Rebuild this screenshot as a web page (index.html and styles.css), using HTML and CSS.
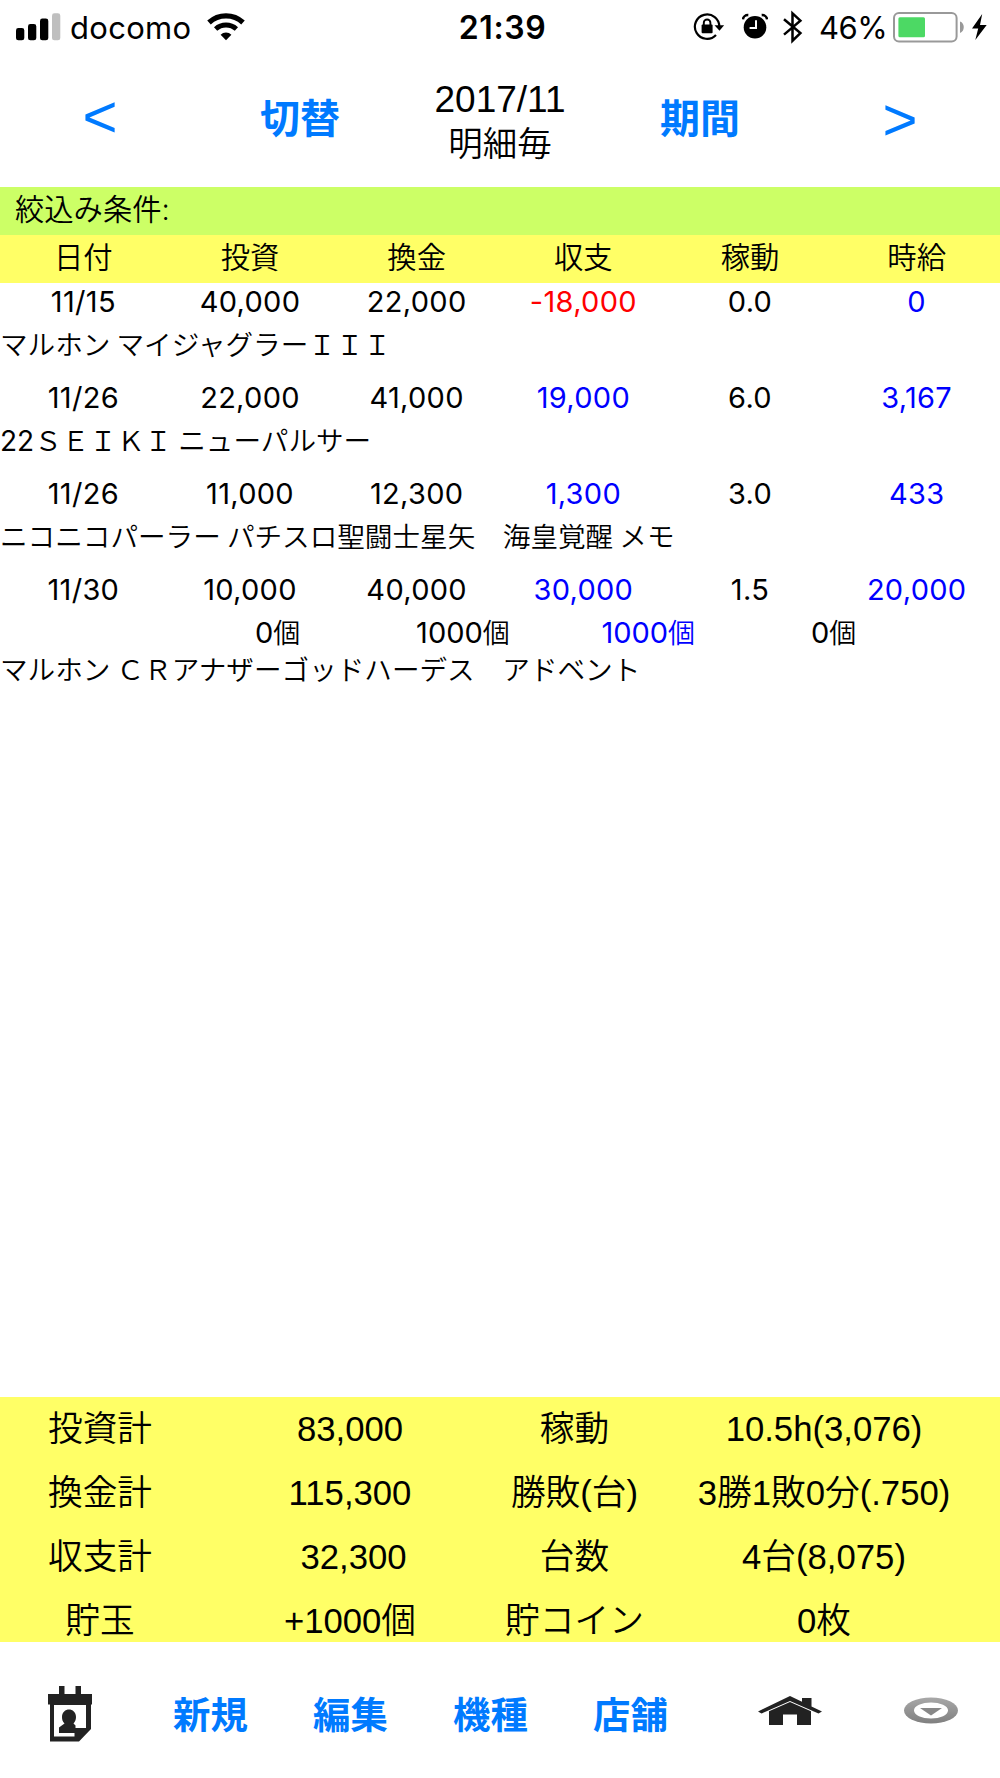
FILE: index.html
```html
<!DOCTYPE html>
<html lang="ja">
<head>
  <meta charset="UTF-8" />
  <meta name="viewport" content="width=device-width, initial-scale=1.0"/>
  <title>明細毎 2017/11</title>
  <link rel="stylesheet" href="styles.css">
</head>
<body>

  <!-- Status bar -->
  <div class="status">
    <div class="status-left">
      <svg width="45" height="56" viewBox="0 0 45 56">
        <rect x="0" y="28" width="8.3" height="12.3" rx="2.4"/>
        <rect x="12" y="24" width="8.3" height="16.3" rx="2.4"/>
        <rect x="24" y="18.6" width="8.3" height="21.7" rx="2.4"/>
        <rect x="36" y="13.3" width="8.3" height="27" rx="2.4" fill="#bfbfbf"/>
      </svg>
      <span class="carrier">docomo</span>
      <svg class="wifi" width="38" height="56" viewBox="0 0 38 56">
        <path d="M2 22.500a25 25 0 0 1 34 0" fill="none" stroke="#000" stroke-width="5.2"/>
        <path d="M8.600 29a15.500 15.500 0 0 1 20.800 0" fill="none" stroke="#000" stroke-width="4.8"/>
        <path d="M19 40.300l-5.400-5.600a7.800 7.800 0 0 1 10.800 0z"/>
      </svg>
    </div>
    <span class="time">21:39</span>
    <div class="status-right">
      <svg width="32" height="56" viewBox="0 0 32 56">
        <path d="M26.3 27A12.2 12.2 0 1 0 23 35" fill="none" stroke="#000" stroke-width="2.2"/>
        <path d="M21.5 25.3h9.6l-4.6 5.500z"/>
        <rect x="8.6" y="24.5" width="11" height="8.8" rx="1"/>
        <path d="M10.8 25v-2.2a3.3 3.3 0 0 1 6.6 0V25" fill="none" stroke="#000" stroke-width="1.9"/>
      </svg>
      <svg class="alarm" width="26" height="56" viewBox="0 0 26 56">
        <circle cx="13" cy="27.3" r="11.3"/>
        <path d="M.9 19.4a5 5 0 0 1 5.4-4.3M25.1 19.4a5 5 0 0 0-5.4-4.3" fill="none" stroke="#000" stroke-width="2.6"/>
        <path d="M14 20.3v7.6H7.6" fill="none" stroke="#fff" stroke-width="2"/>
      </svg>
      <svg class="bluetooth" width="20" height="56" viewBox="0 0 20 56">
        <path d="M1 19.3l16.4 13.8-7.9 7.600V13.3l7.9 7.400L1 34.6" fill="none" stroke="#000" stroke-width="2.5"/>
      </svg>
      <span class="percent">46%</span>
      <svg class="battery" width="72" height="56" viewBox="0 0 72 56">
        <rect x="1" y="13" width="62.6" height="28.6" rx="5" fill="#fff" stroke="#999" stroke-width="2"/>
        <rect x="5.4" y="17.3" width="26.6" height="20" rx="1.5" fill="#4cd964"/>
        <path d="M67 21.6c5 1.4 5 10 0 11.4z" fill="#999"/>
      </svg>
      <svg class="bolt" width="15" height="56" viewBox="0 0 15 56">
        <path d="M10.2 14L0 28.6h6.2L3.3 40 14.7 25H8z"/>
      </svg>
    </div>
  </div>

  <!-- Month navigation -->
  <div class="nav">
    <a class="arrow prev">&lt;</a>
    <a>切替</a>
    <div class="title">
      <div class="month">2017/11</div>
      <div class="mode">明細毎</div>
    </div>
    <a>期間</a>
    <a class="arrow next">&gt;</a>
  </div>

  <div class="filter">絞込み条件:</div>

  <div class="cols head">
    <span>日付</span><span>投資</span><span>換金</span><span>収支</span><span>稼動</span><span>時給</span>
  </div>

  <!-- Records -->
  <div class="list">
    <div class="record">
      <div class="cols">
        <span>11/15</span><span>40,000</span><span>22,000</span><span class="minus">-18,000</span><span>0.0</span><span class="plus">0</span>
      </div>
      <div class="name">マルホン マイジャグラーＩＩＩ</div>
    </div>
    <div class="record">
      <div class="cols">
        <span>11/26</span><span>22,000</span><span>41,000</span><span class="plus">19,000</span><span>6.0</span><span class="plus">3,167</span>
      </div>
      <div class="name"><span class="num">22</span>ＳＥＩＫＩ ニューパルサー</div>
    </div>
    <div class="record">
      <div class="cols">
        <span>11/26</span><span>11,000</span><span>12,300</span><span class="plus">1,300</span><span>3.0</span><span class="plus">433</span>
      </div>
      <div class="name">ニコニコパーラー パチスロ聖闘士星矢　海皇覚醒 メモ</div>
    </div>
    <div class="record">
      <div class="cols">
        <span>11/30</span><span>10,000</span><span>40,000</span><span class="plus">30,000</span><span>1.5</span><span class="plus">20,000</span>
      </div>
      <div class="balls">
        <span>0<small>個</small></span><span>1000<small>個</small></span><span class="plus">1000<small>個</small></span><span>0<small>個</small></span>
      </div>
      <div class="name tight">マルホン ＣＲアナザーゴッドハーデス　アドベント</div>
    </div>
  </div>

  <!-- Totals -->
  <div class="total">
    <span>投資計</span><span>83,000</span><span>稼動</span><span>10.5h(3,076)</span>
    <span>換金計</span><span>115,300</span><span>勝敗(台)</span><span>3勝1敗0分(.750)</span>
    <span>収支計</span><span class="balance">32,300</span><span>台数</span><span>4台(8,075)</span>
    <span>貯玉</span><span>+1000個</span><span>貯コイン</span><span>0枚</span>
  </div>

  <!-- Toolbar -->
  <div class="toolbar">
    <a>
      <svg width="44" height="56" viewBox="0 0 44 56">
        <path fill="#222" fill-rule="evenodd" d="M0 8h11V0h5.500v8h11V0H33v8h11v10.500h-1V43L31 55.500H2V18.500H0zM6 19v31.500h20.500V42H38V19z"/>
        <path fill="#222" d="M11 47v-5.500l5.500-4c-2-2-2.500-4-2.500-6.500 0-10 14-10 14 0 0 2.500-.8 4.500-2.500 6.500l2 2V47z"/>
      </svg>
    </a>
    <a class="text">新規</a>
    <a class="text">編集</a>
    <a class="text">機種</a>
    <a class="text">店舗</a>
    <a class="home">
      <svg width="64" height="29" viewBox="0 0 64 29">
        <path fill="#222" d="M0 15.500L32 0l12 5.800V2h9.500v8.400L64 15.500l-3.500 2L32 5 3.500 17.500z"/>
        <path fill="#222" d="M11 15.200L32 6l21 9.200V29H39V18.500H25V29H11z"/>
      </svg>
    </a>
    <a class="more">
      <svg width="54" height="27" viewBox="0 0 54 27">
        <defs>
          <linearGradient id="ring" x1="0" y1="0" x2="0" y2="1">
            <stop offset="0" stop-color="#a8a8a8"/>
            <stop offset="1" stop-color="#808080"/>
          </linearGradient>
        </defs>
        <ellipse cx="27" cy="13.500" rx="27" ry="13" fill="url(#ring)"/>
        <ellipse cx="27" cy="13.500" rx="17" ry="8" fill="#fff"/>
        <path d="M16 11h22L27 18.500z" fill="#888"/>
      </svg>
    </a>
  </div>

</body>
</html>
```
FILE: styles.css
```css
* {
  box-sizing: border-box;
}

body {
  margin: 0;
  width: 1000px;
  height: 1778px;
  display: flex;
  flex-direction: column;
  background: #fff;
  color: #000;
  font-family: Inter, "Noto Sans CJK JP", sans-serif;
  font-weight: 400;
  white-space: nowrap;
  overflow: hidden;
}

svg {
  display: block;
  flex: none;
}

small {
  font-size: 27px;
  font-weight: 350;
}

/* status bar */
.status {
  height: 56px;
  display: grid;
  grid-template-columns: 400px 205px 395px;
  align-items: center;
}

.status-left,
.status-right {
  display: flex;
  align-items: center;
}

.status-left {
  padding-left: 16px;
}

.carrier {
  width: 121px;
  margin-left: 9px;
  padding-bottom: 2px;
  font-size: 31px;
  letter-spacing: 0.3px;
}

.wifi {
  margin-left: 16px;
}

.time {
  padding-bottom: 2px;
  text-align: center;
  font-size: 32px;
  font-weight: 600;
  letter-spacing: 0.6px;
}

.status-right {
  justify-content: flex-end;
  padding-right: 13px;
}

.alarm {
  margin-left: 17px;
}

.bluetooth {
  margin-left: 15px;
}

.percent {
  width: 68px;
  margin-left: 16px;
  padding-bottom: 2px;
  font-size: 31px;
  letter-spacing: -0.5px;
}

.battery {
  margin-left: 6px;
}

.bolt {
  margin-left: 7px;
}

/* month navigation */
.nav {
  height: 131px;
  display: grid;
  grid-template-columns: repeat(5, 200px);
  text-align: center;
}

a {
  color: #007aff;
  font-weight: 700;
}

.nav a {
  font-size: 40px;
  line-height: 126px;
}

.nav .arrow {
  font-family: "Liberation Sans", sans-serif;
  font-size: 60px;
  font-weight: 400;
}

.nav .prev {
  line-height: 122px;
}

.nav .next {
  line-height: 127px;
}

.title {
  padding-top: 22px;
}

.month {
  font-family: "Liberation Sans", sans-serif;
  font-size: 37px;
  line-height: 44px;
}

.mode {
  font-size: 34.5px;
  font-weight: 350;
  line-height: 44px;
}

/* condition and column heads */
.filter {
  height: 47.5px;
  padding-left: 15px;
  background: #ccff66;
  font-size: 29.3px;
  font-weight: 350;
  line-height: 45px;
}

.cols {
  display: grid;
  grid-template-columns: repeat(6, 1fr);
  text-align: center;
}

.head {
  height: 48px;
  background: #ffff66;
  font-size: 29.3px;
  font-weight: 350;
  line-height: 45px;
}

/* records */
.list {
  flex: 1;
}

.record {
  height: 96px;
}

.record .cols {
  height: 40px;
  font-size: 29px;
  letter-spacing: 0.3px;
  line-height: 38px;
}

.name {
  height: 43px;
  font-family: "Noto Sans CJK JP", sans-serif;
  font-size: 27.6px;
  font-weight: 350;
  line-height: 41px;
}

.num {
  font-family: Inter, sans-serif;
  font-size: 28px;
  font-weight: 400;
}

.tight {
  height: 31px;
  line-height: 29px;
}

.balls {
  height: 43px;
  display: grid;
  grid-template-columns: repeat(4, 185.3px);
  padding-left: 185px;
  text-align: center;
  font-size: 29px;
  line-height: 43px;
}

.minus {
  color: #ff0000;
}

.plus {
  color: #0000ff;
}

/* totals */
.total {
  height: 245px;
  display: grid;
  grid-template-columns: 200px 300px 149px 350px;
  grid-auto-rows: 64px;
  overflow: hidden;
  background: #ffff66;
  text-align: center;
  font-family: "Liberation Sans", "Noto Sans CJK JP", sans-serif;
  font-size: 34.7px;
  font-weight: 350;
  line-height: 64px;
}

.balance {
  padding-left: 7px;
}

/* toolbar */
.toolbar {
  height: 136.5px;
  display: grid;
  grid-template-columns: repeat(5, 140px) 180px 102px;
}

.toolbar a {
  display: flex;
  justify-content: center;
  align-items: center;
  padding-top: 8px;
}

.toolbar .text {
  padding-top: 7px;
  padding-left: 1px;
  font-size: 37.4px;
}

.toolbar .home,
.toolbar .more {
  padding-top: 2px;
}
```
